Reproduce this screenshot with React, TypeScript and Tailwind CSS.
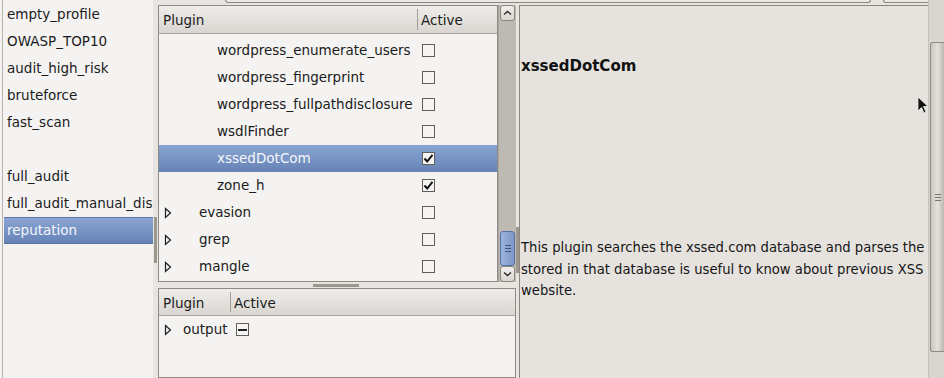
import React from 'react';

const profiles = [
  'empty_profile',
  'OWASP_TOP10',
  'audit_high_risk',
  'bruteforce',
  'fast_scan',
  '',
  'full_audit',
  'full_audit_manual_disclosure',
  'reputation',
];

type Row = { name: string; level: 0 | 1; checked?: boolean; selected?: boolean };

const plugins: Row[] = [
  { name: 'wordpress_enumerate_users', level: 1 },
  { name: 'wordpress_fingerprint', level: 1 },
  { name: 'wordpress_fullpathdisclosure', level: 1 },
  { name: 'wsdlFinder', level: 1 },
  { name: 'xssedDotCom', level: 1, checked: true, selected: true },
  { name: 'zone_h', level: 1, checked: true },
  { name: 'evasion', level: 0 },
  { name: 'grep', level: 0 },
  { name: 'mangle', level: 0 },
];

function Expander() {
  return (
    <svg width="8" height="12" viewBox="0 0 8 12" className="shrink-0">
      <polygon points="1.5,1.5 6.5,6 1.5,10.5" fill="#f4f3f1" stroke="#1c1c1c" strokeWidth="1.2" />
    </svg>
  );
}

function Check({ checked, mixed }: { checked?: boolean; mixed?: boolean }) {
  return (
    <div className="w-[13px] h-[13px] border border-[#5f5e5b] bg-[#f6f5f3] flex items-center justify-center shrink-0">
      {checked && (
        <svg width="11" height="11" viewBox="0 0 11 11">
          <path d="M1.5 5.5 L4.2 8.5 L9.5 1.8" fill="none" stroke="#111" strokeWidth="2" />
        </svg>
      )}
      {mixed && <div className="w-[9px] h-[2px] bg-[#222]" />}
    </div>
  );
}

function Grip({ vertical }: { vertical?: boolean }) {
  return (
    <div
      className={
        vertical
          ? 'w-[3px] h-[46px] bg-[radial-gradient(circle,#9c988f_0.8px,transparent_1px)] bg-[length:2px_2px]'
          : 'w-[46px] h-[3px] bg-[radial-gradient(circle,#9c988f_0.8px,transparent_1px)] bg-[length:2px_2px]'
      }
    />
  );
}

function HeaderCell({ children, className }: { children?: React.ReactNode; className?: string }) {
  return <div className={'flex items-center h-full pt-[2px] ' + (className ?? '')}>{children}</div>;
}

function ArrowBtn({ down }: { down?: boolean }) {
  return (
    <div className="h-[16px] mx-[1px] rounded-[3px] border border-[#8b8780] bg-gradient-to-b from-[#f1efec] to-[#d9d5cf] flex items-center justify-center">
      <svg width="9" height="6" viewBox="0 0 9 6">
        <path d={down ? 'M1 1.5 L4.5 4.5 L8 1.5' : 'M1 4.5 L4.5 1.5 L8 4.5'} fill="none" stroke="#2a2a2a" strokeWidth="1.4" />
      </svg>
    </div>
  );
}

export default function App() {
  return (
    <div className="relative w-[944px] h-[378px] overflow-hidden bg-[#e8e5e1] flex font-['DejaVu_Sans',sans-serif] text-[13.5px] text-[#1b1b1b]">
      {/* profiles list */}
      <div className="w-[153px] h-full bg-[#f4f3f1] pl-[2px] shrink-0">
        <div className="h-full border-l border-[#b6b2ac] pt-[1px] overflow-hidden">
          {profiles.map((p, i) => {
            const sel = p === 'reputation';
            return (
              <div
                key={i}
                className={
                  'h-[27px] flex items-center whitespace-nowrap overflow-hidden ' +
                  (sel
                    ? 'ml-[1px] pl-[3px] bg-gradient-to-b from-[#8aa5d3] to-[#6683b6] text-[#f5f7fb] border-y border-[#5a76a8]'
                    : 'pl-[4px]')
                }
              >
                {p}
              </div>
            );
          })}
        </div>
      </div>

      {/* vertical splitter */}
      <div className="w-[5px] h-full flex items-start justify-center pt-[217px] shrink-0">
        <Grip vertical />
      </div>

      {/* centre + details */}
      <div className="w-[770px] h-full flex flex-col shrink-0">
        <div className="h-[5px] flex shrink-0">
          <div className="ml-[67px] w-[646px] h-[3px] border-x border-b border-[#8b8780] rounded-b-[3px] bg-[#ebe9e6]" />
          <div className="ml-[12px] w-[45px] h-[3px] border-l border-b border-[#8b8780] rounded-bl-[3px] bg-[#ebe9e6]" />
        </div>
        <div className="flex-1 flex min-h-0">
          {/* plugin trees */}
          <div className="w-[358px] flex flex-col shrink-0">
            <div className="h-[277px] flex shrink-0">
              <div className="w-[340px] border border-[#8e8b86] bg-[#f4f3f1] flex flex-col">
                <div className="h-[28px] flex border-b border-[#a8a49e] bg-gradient-to-b from-[#efedea] to-[#d9d6d1] shrink-0">
                  <HeaderCell className="w-[258px] pl-[4px]">Plugin</HeaderCell>
                  <div className="w-px my-[3px] bg-[#a29e97]" />
                  <HeaderCell className="pl-[3px]">Active</HeaderCell>
                </div>
                <div className="pt-[3px]">
                  {plugins.map((r) => (
                    <div
                      key={r.name}
                      className={
                        'h-[27px] flex items-center ' +
                        (r.selected ? 'bg-gradient-to-b from-[#8aa5d3] to-[#6683b6] text-[#f5f7fb]' : '')
                      }
                    >
                      <div className="w-[258px] flex items-center whitespace-nowrap overflow-hidden">
                        {r.level === 0 ? (
                          <>
                            <div className="pl-[5px] w-[40px]">
                              <Expander />
                            </div>
                            <span>{r.name}</span>
                          </>
                        ) : (
                          <span className="pl-[58px]">{r.name}</span>
                        )}
                      </div>
                      <div className="pl-[5px]">
                        <Check checked={r.checked} />
                      </div>
                    </div>
                  ))}
                </div>
              </div>
              {/* scrollbar */}
              <div className="w-[18px] flex flex-col bg-[#bdb9b3] border-l border-[#a9a59f]">
                <ArrowBtn />
                <div className="flex-1 flex flex-col justify-end">
                  <div className="h-[35px] mx-[1px] rounded-[3px] border border-[#5672a5] bg-gradient-to-r from-[#9db4dc] to-[#7c98c8] flex items-center justify-center">
                    <div className="flex flex-col gap-[2px]">
                      <div className="w-[6px] h-px bg-[#3e5684]" />
                      <div className="w-[6px] h-px bg-[#3e5684]" />
                      <div className="w-[6px] h-px bg-[#3e5684]" />
                    </div>
                  </div>
                </div>
                <ArrowBtn down />
              </div>
            </div>
            {/* horizontal splitter */}
            <div className="h-[6px] flex items-center pl-[155px] shrink-0">
              <Grip />
            </div>
            <div className="flex-1 border border-[#8e8b86] bg-[#f4f3f1] flex flex-col min-h-0">
              <div className="h-[27px] flex border-b border-[#a8a49e] bg-gradient-to-b from-[#efedea] to-[#d9d6d1] shrink-0">
                <HeaderCell className="w-[71px] pl-[4px]">Plugin</HeaderCell>
                <div className="w-px my-[3px] bg-[#a29e97]" />
                <HeaderCell className="pl-[3px]">Active</HeaderCell>
              </div>
              <div className="h-[27px] flex items-center">
                <div className="pl-[5px] w-[24px]">
                  <Expander />
                </div>
                <span>output</span>
                <div className="pl-[8px]">
                  <Check mixed />
                </div>
              </div>
            </div>
          </div>

          {/* splitter */}
          <div className="w-[3px] flex items-start pt-[222px] shrink-0">
            <Grip vertical />
          </div>

          {/* details */}
          <div className="flex-1 border-l border-t border-[#8b8780] bg-[#e6e3df] pl-[1px] overflow-hidden whitespace-nowrap">
            <div className="pt-[49px] font-bold text-[15px] text-[#111] leading-[22px]">xssedDotCom</div>
            <div className="pt-[160px] text-[13.2px] leading-[21.5px] text-[#151515]">
              <div>This plugin searches the xssed.com database and parses the result. The information</div>
              <div>stored in that database is useful to know about previous XSS vulnerabilities in the</div>
              <div>website.</div>
            </div>
          </div>
        </div>
      </div>

      {/* right scrollbar */}
      <div className="w-[16px] h-full bg-[#d9d6d1] border-l border-[#c3bfb9] flex flex-col pt-[42px] pb-[26px] shrink-0">
        <div className="flex-1 ml-[1px] rounded-l-[3px] border border-r-0 border-[#8f8b85] bg-gradient-to-r from-[#c9c5bf] via-[#e4e1dc] to-[#bcb8b1] flex items-center justify-center">
          <div className="flex flex-col gap-[2px]">
            <div className="w-[6px] h-px bg-[#7a766f]" />
            <div className="w-[6px] h-px bg-[#7a766f]" />
            <div className="w-[6px] h-px bg-[#7a766f]" />
          </div>
        </div>
      </div>

      {/* mouse pointer */}
      <svg className="absolute left-[917px] top-[96px]" width="12" height="19" viewBox="0 0 12 19">
        <path d="M1 1 L1 15 L4.5 11.5 L7 17 L9 16 L6.5 10.5 L11 10.5 Z" fill="#111" stroke="#eee" strokeWidth="0.8" />
      </svg>
    </div>
  );
}
